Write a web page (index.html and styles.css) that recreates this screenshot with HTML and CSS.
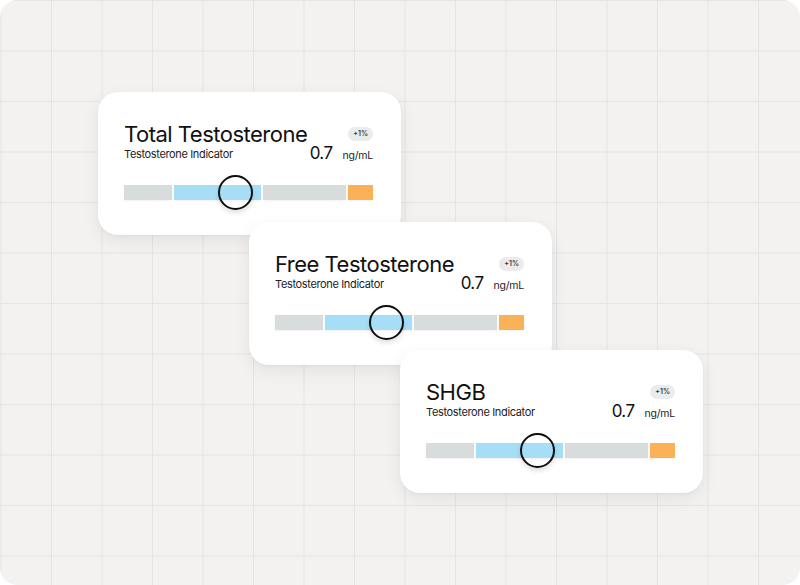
FILE: index.html
```html
<!DOCTYPE html>
<html>
<head>
<meta charset="utf-8">
<link rel="stylesheet" href="styles.css">
</head>
<body>
<div class="frame">
  <div class="card card-1">
    <div class="head">
      <div class="names">
        <div class="title">Total Testosterone</div>
        <div class="sub">Testosterone Indicator</div>
      </div>
      <div class="stats">
        <span class="badge">+1%</span>
        <div class="reading"><span class="value">0.7</span><span class="unit">ng/mL</span></div>
      </div>
    </div>
    <div class="bar">
      <span class="seg seg-grey seg-a"></span>
      <span class="seg seg-blue"></span>
      <span class="seg seg-grey seg-c"></span>
      <span class="seg seg-orange"></span>
      <span class="knob"></span>
    </div>
  </div>
  <div class="card card-2">
    <div class="head">
      <div class="names">
        <div class="title">Free Testosterone</div>
        <div class="sub">Testosterone Indicator</div>
      </div>
      <div class="stats">
        <span class="badge">+1%</span>
        <div class="reading"><span class="value">0.7</span><span class="unit">ng/mL</span></div>
      </div>
    </div>
    <div class="bar">
      <span class="seg seg-grey seg-a"></span>
      <span class="seg seg-blue"></span>
      <span class="seg seg-grey seg-c"></span>
      <span class="seg seg-orange"></span>
      <span class="knob"></span>
    </div>
  </div>
  <div class="card card-3">
    <div class="head">
      <div class="names">
        <div class="title">SHGB</div>
        <div class="sub">Testosterone Indicator</div>
      </div>
      <div class="stats">
        <span class="badge">+1%</span>
        <div class="reading"><span class="value">0.7</span><span class="unit">ng/mL</span></div>
      </div>
    </div>
    <div class="bar">
      <span class="seg seg-grey seg-a"></span>
      <span class="seg seg-blue"></span>
      <span class="seg seg-grey seg-c"></span>
      <span class="seg seg-orange"></span>
      <span class="knob"></span>
    </div>
  </div>
</div>
</body>
</html>
```

FILE: styles.css
```css
* { box-sizing: border-box; }
html, body {
  margin: 0;
  padding: 0;
  background: #ffffff;
}
body {
  font-family: "Inter", "Noto Sans", sans-serif;
  color: #111111;
}
.frame {
  width: 800px;
  height: 585px;
  border-radius: 18px;
  overflow: hidden;
  background-color: #f3f2f0;
  background-image:
    linear-gradient(to right, #e6e4e2 1px, transparent 1px),
    linear-gradient(to bottom, #e6e4e2 1px, transparent 1px);
  background-size: 50.5px 50.5px;
  background-position: 0.5px 0px;
  padding-top: 92px;
  display: flex;
  flex-direction: column;
  align-items: flex-start;
}
.card {
  position: relative;
  width: 303px;
  height: 143px;
  background: #ffffff;
  border-radius: 20px;
  box-shadow: 0 6px 18px rgba(0, 0, 0, 0.07), 0 1px 3px rgba(0, 0, 0, 0.04);
  padding: 29px 28px 0 26px;
}
.card-1 { margin-left: 98px; }
.card-2 { margin-left: 249px; margin-top: -13px; }
.card-3 { margin-left: 400px; margin-top: -15px; }
.head {
  display: flex;
  justify-content: space-between;
  align-items: flex-start;
  width: 249px;
}
.title {
  font-size: 22px;
  line-height: 26px;
  letter-spacing: -0.5px;
  font-weight: 400;
  white-space: nowrap;
}
.sub {
  font-size: 11px;
  line-height: 14px;
  letter-spacing: -0.35px;
  color: #222;
  white-space: nowrap;
}
.stats {
  display: flex;
  flex-direction: column;
  align-items: flex-end;
  padding-top: 6px;
}
.badge {
  display: inline-block;
  height: 14px;
  padding: 0 5px;
  border-radius: 7px;
  background: #ebebeb;
  font-size: 7px;
  line-height: 14px;
  font-weight: 600;
  color: #333;
}
.reading {
  display: flex;
  align-items: baseline;
  margin-top: 3px;
  white-space: nowrap;
}
.value {
  font-size: 17px;
  line-height: 18px;
  letter-spacing: -0.6px;
}
.unit {
  font-size: 10.5px;
  margin-left: 10px;
  letter-spacing: -0.2px;
  color: #222;
}
.bar {
  position: relative;
  display: flex;
  gap: 2px;
  height: 15px;
  margin-top: 23px;
  width: 249px;
}
.seg {
  display: block;
  height: 15px;
  box-shadow: 0 1px 2px rgba(0,0,0,0.06);
}
.seg-grey { background: #d9dcdd; }
.seg-a { width: 48px; }
.seg-c { width: 83px; }
.seg-blue { width: 87px; background: #a7def7; }
.seg-orange { width: 25px; background: #fbb158; }
.knob {
  position: absolute;
  left: 94px;
  top: -10px;
  width: 35px;
  height: 35px;
  border: 2.5px solid #0d0d0d;
  border-radius: 50%;
  box-shadow: 0 3px 5px rgba(0,0,0,0.12);
}
```
